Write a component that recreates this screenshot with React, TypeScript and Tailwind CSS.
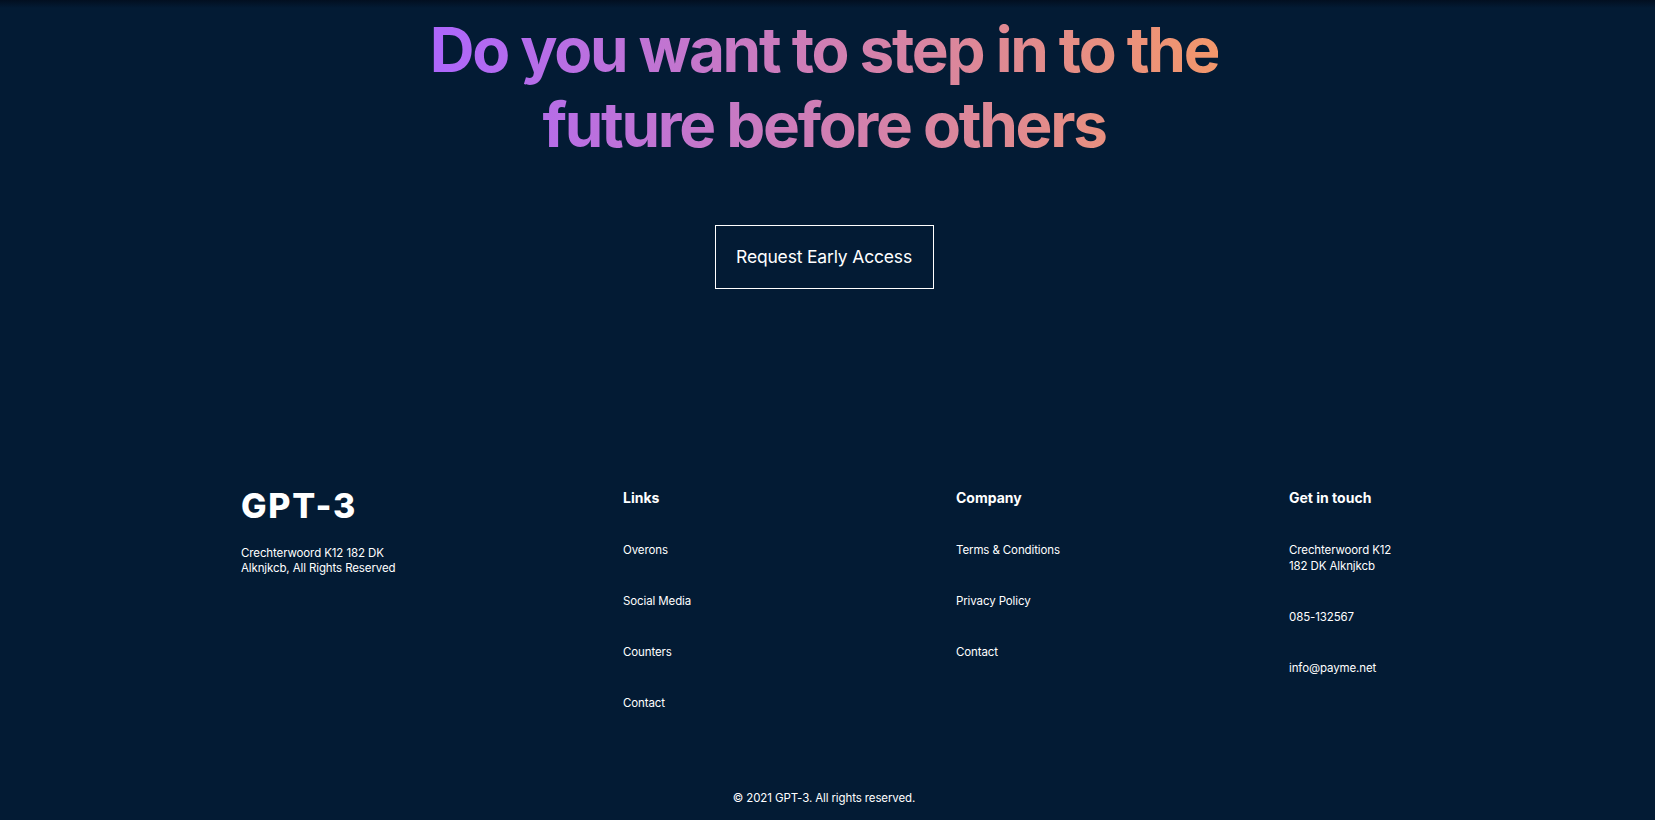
import React from "react";

const links = ["Overons", "Social Media", "Counters", "Contact"];
const company = ["Terms & Conditions", "Privacy Policy", "Contact"];

const FooterColumn = ({ title, items, width }: { title: string; items: React.ReactNode[]; width: string }) => (
  <div className={`flex flex-col gap-[35px] pt-[3px] ${width}`}>
    <h4 className="mb-[1px] text-[14px] leading-[17px] font-bold text-white">{title}</h4>
    {items.map((item, i) => (
      <p key={i} className="text-[11.5px] leading-4 tracking-[-0.01em] text-white">
        {item}
      </p>
    ))}
  </div>
);

export default function App() {
  return (
    <div className="min-h-[820px] bg-[#031B34] font-['Inter',sans-serif] text-white flex flex-col">
      <div className="h-[8px] bg-gradient-to-b from-[#020f20] to-[#031B34]"></div>
      <section className="flex flex-col items-center pt-[4px] pr-[7px]">
        <h1 className="w-fit text-center text-[62px] leading-[75px] font-bold tracking-[-0.037em] bg-[linear-gradient(89.97deg,#AE67FA_1.84%,#F49867_102.67%)] bg-clip-text text-transparent">
          Do you want to step in to the
          <br />
          future before others
        </h1>
        <button className="mt-[63px] w-[219px] h-[64px] border border-white text-[17.5px] tracking-[-0.01em] text-white">
          Request Early Access
        </button>
      </section>

      <footer className="mt-[197px] pl-[241px] flex">
        <div className="w-[382px] flex flex-col">
          <h3 className="text-[34px] leading-[39px] font-extrabold tracking-[0.05em]">GPT-3</h3>
          <p className="mt-[21px] text-[11.5px] leading-[15px] tracking-[-0.01em]">
            Crechterwoord K12 182 DK
            <br />
            Alknjkcb, All Rights Reserved
          </p>
        </div>
        <FooterColumn title="Links" items={links} width="w-[333px]" />
        <FooterColumn title="Company" items={company} width="w-[333px]" />
        <FooterColumn
          title="Get in touch"
          width="w-[200px]"
          items={[
            <>
              Crechterwoord K12
              <br />
              182 DK Alknjkcb
            </>,
            "085-132567",
            "info@payme.net",
          ]}
        />
      </footer>

      <p className="mt-auto pb-[14px] pr-[7px] text-center text-[11.5px] leading-4 tracking-[-0.01em]">
        © 2021 GPT-3. All rights reserved.
      </p>
    </div>
  );
}
